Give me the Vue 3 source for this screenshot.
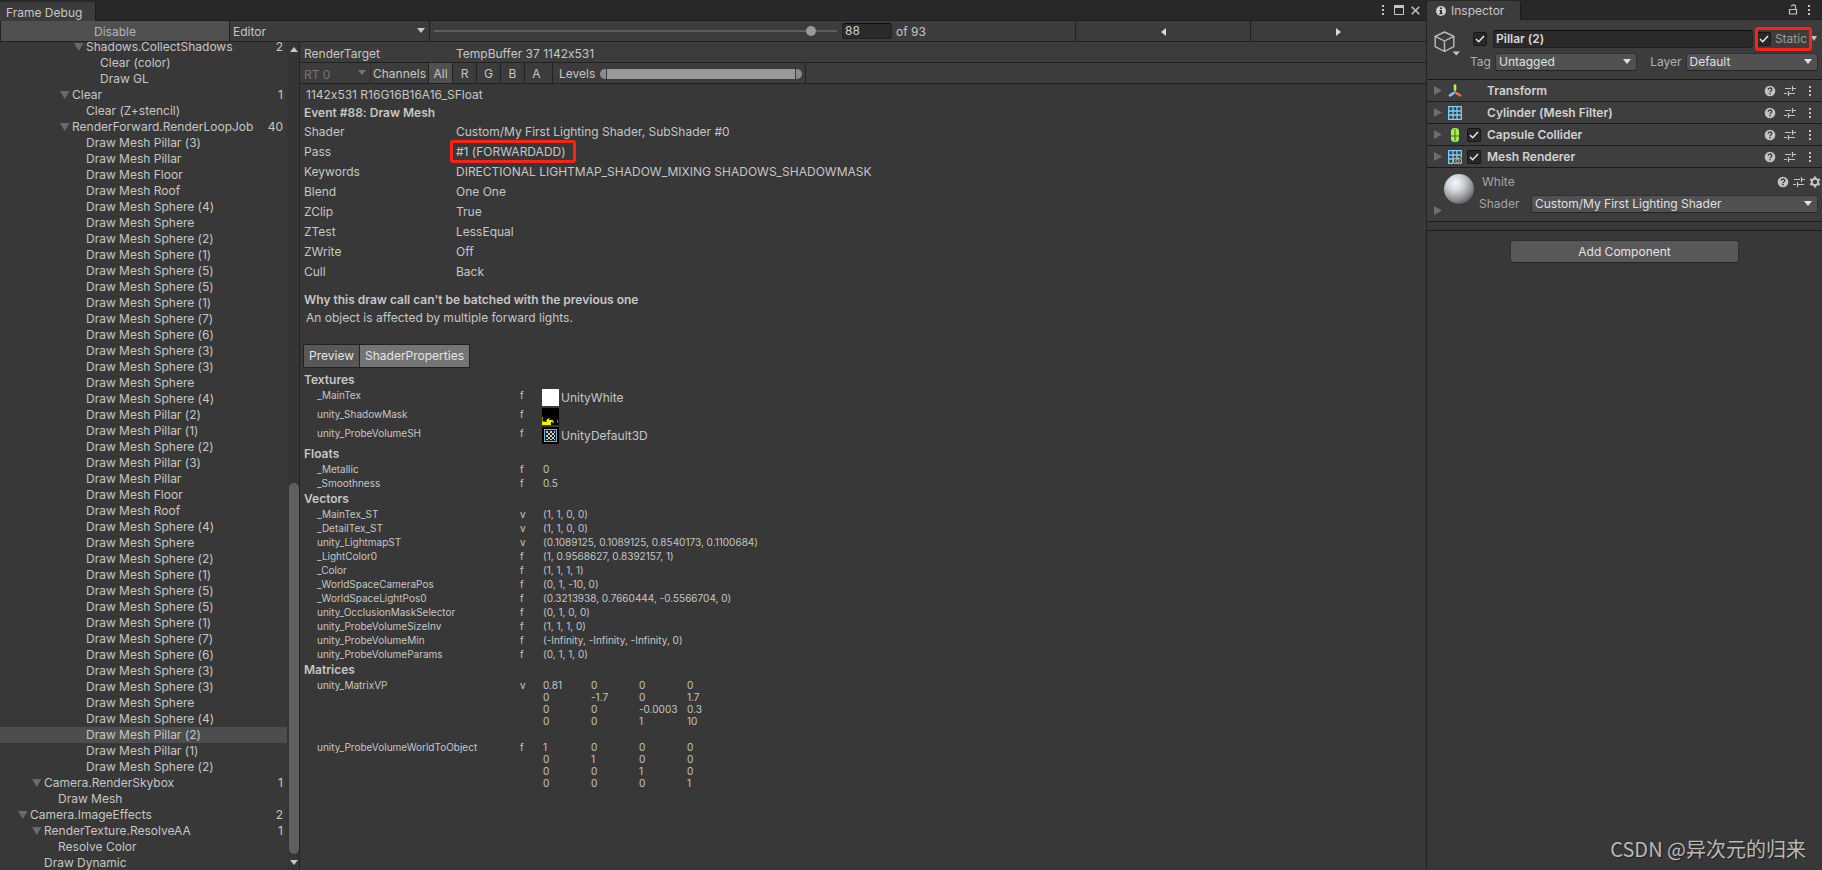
<script setup>
import { ref } from 'vue'

const meshes = [
  'Pillar (3)', 'Pillar', 'Floor', 'Roof', 'Sphere (4)', 'Sphere', 'Sphere (2)', 'Sphere (1)',
  'Sphere (5)', 'Sphere (5)', 'Sphere (1)', 'Sphere (7)', 'Sphere (6)', 'Sphere (3)', 'Sphere (3)',
  'Sphere', 'Sphere (4)', 'Pillar (2)', 'Pillar (1)', 'Sphere (2)',
]

const events = [
  { level: 5, name: 'Shadows.CollectShadows', count: 2 },
  { level: 6, name: 'Clear (color)' },
  { level: 6, name: 'Draw GL' },
  { level: 4, name: 'Clear', count: 1 },
  { level: 5, name: 'Clear (Z+stencil)' },
  { level: 4, name: 'RenderForward.RenderLoopJob', count: 40 },
  ...[...meshes, ...meshes].map((n, i) => ({
    level: 5,
    name: 'Draw Mesh ' + n,
    selected: i === 37,
  })),
  { level: 2, name: 'Camera.RenderSkybox', count: 1 },
  { level: 3, name: 'Draw Mesh' },
  { level: 1, name: 'Camera.ImageEffects', count: 2 },
  { level: 2, name: 'RenderTexture.ResolveAA', count: 1 },
  { level: 3, name: 'Resolve Color' },
  { level: 2, name: 'Draw Dynamic' },
]

const details = [
  ['Shader', 'Custom/My First Lighting Shader, SubShader #0'],
  ['Pass', '#1 (FORWARDADD)'],
  ['Keywords', 'DIRECTIONAL LIGHTMAP_SHADOW_MIXING SHADOWS_SHADOWMASK'],
  ['Blend', 'One One'],
  ['ZClip', 'True'],
  ['ZTest', 'LessEqual'],
  ['ZWrite', 'Off'],
  ['Cull', 'Back'],
]

const textures = [
  { name: '_MainTex', stage: 'f', kind: 'white', value: 'UnityWhite' },
  { name: 'unity_ShadowMask', stage: 'f', kind: 'mask', value: '' },
  { name: 'unity_ProbeVolumeSH', stage: 'f', kind: 'volume', value: 'UnityDefault3D' },
]

const valueGroups = [
  {
    title: 'Floats',
    rows: [
      ['_Metallic', 'f', '0'],
      ['_Smoothness', 'f', '0.5'],
    ],
  },
  {
    title: 'Vectors',
    rows: [
      ['_MainTex_ST', 'v', '(1, 1, 0, 0)'],
      ['_DetailTex_ST', 'v', '(1, 1, 0, 0)'],
      ['unity_LightmapST', 'v', '(0.1089125, 0.1089125, 0.8540173, 0.1100684)'],
      ['_LightColor0', 'f', '(1, 0.9568627, 0.8392157, 1)'],
      ['_Color', 'f', '(1, 1, 1, 1)'],
      ['_WorldSpaceCameraPos', 'f', '(0, 1, -10, 0)'],
      ['_WorldSpaceLightPos0', 'f', '(0.3213938, 0.7660444, -0.5566704, 0)'],
      ['unity_OcclusionMaskSelector', 'f', '(0, 1, 0, 0)'],
      ['unity_ProbeVolumeSizeInv', 'f', '(1, 1, 1, 0)'],
      ['unity_ProbeVolumeMin', 'f', '(-Infinity, -Infinity, -Infinity, 0)'],
      ['unity_ProbeVolumeParams', 'f', '(0, 1, 1, 0)'],
    ],
  },
]

const matrices = [
  {
    name: 'unity_MatrixVP',
    stage: 'v',
    rows: [['0.81', '0', '0', '0'], ['0', '-1.7', '0', '1.7'], ['0', '0', '-0.0003', '0.3'], ['0', '0', '1', '10']],
  },
  {
    name: 'unity_ProbeVolumeWorldToObject',
    stage: 'f',
    rows: [['1', '0', '0', '0'], ['0', '1', '0', '0'], ['0', '0', '1', '0'], ['0', '0', '0', '1']],
  },
]

const components = [
  { name: 'Transform', icon: 'transform' },
  { name: 'Cylinder (Mesh Filter)', icon: 'grid' },
  { name: 'Capsule Collider', icon: 'capsule', toggle: true },
  { name: 'Mesh Renderer', icon: 'renderer', toggle: true },
]

const channels = ['All', 'R', 'G', 'B', 'A']
const channel = ref('All')
const eventIndex = ref(88)
const objectName = ref('Pillar (2)')
</script>

<template>
  <div class="editor">
    <svg class="defs" aria-hidden="true">
      <symbol id="arrow-down" viewBox="0 0 8 5"><path d="M0 0h8L4 5z" fill="currentColor" /></symbol>
      <symbol id="help" viewBox="0 0 12 12">
        <circle cx="6" cy="6" r="5.3" fill="#c4c4c4" />
        <path d="M4.2 4.7a1.8 1.6 0 1 1 2.7 1.3c-.6.4-.9.6-.9 1.2" fill="none" stroke="#3a3a3a" stroke-width="1.3" />
        <rect x="5.3" y="8" width="1.4" height="1.4" fill="#3a3a3a" />
      </symbol>
      <symbol id="preset" viewBox="0 0 12 12">
        <path d="M1 3.500h6M9 3.500h3M0 8.500h3M5 8.500h6M8.500 1v5M4.500 6v5" fill="none" stroke="#c4c4c4" stroke-width="1.2" />
      </symbol>
      <symbol id="dots" viewBox="0 0 4 12">
        <path d="M1 1h2v2H1zM1 5h2v2H1zM1 9h2v2H1z" fill="#c4c4c4" />
      </symbol>
      <symbol id="gear" viewBox="0 0 12 12">
        <circle cx="6" cy="6" r="3.2" fill="none" stroke="#c4c4c4" stroke-width="2" />
        <path d="M6 .5v2M6 9.500v2M1.200 3.200l1.800 1M9 7.800l1.800 1M1.200 8.800l1.800-1M9 4.200l1.800-1" stroke="#c4c4c4" stroke-width="2.200" />
      </symbol>
    </svg>

    <section class="debugger">
      <header class="tabbar">
        <h1 class="tab">Frame Debug</h1>
        <div class="window-actions">
          <button aria-label="Menu"><svg width="4" height="12"><use href="#dots" /></svg></button>
          <button aria-label="Maximize">
            <svg width="10" height="10" viewBox="0 0 10 10"><path d="M.5.5h9v9h-9z" fill="none" stroke="#c4c4c4" /><path d="M0 0h10v3H0z" fill="#c4c4c4" /></svg>
          </button>
          <button aria-label="Close">
            <svg width="9" height="9" viewBox="0 0 9 9"><path d="M.7.7l7.600 7.600M8.300.7L.7 8.300" stroke="#c4c4c4" stroke-width="1.500" /></svg>
          </button>
        </div>
      </header>

      <div class="toolbar">
        <button class="disable">Disable</button>
        <div class="target-select">
          <select aria-label="Connection target"><option>Editor</option></select>
          <svg class="caret" width="8" height="5"><use href="#arrow-down" /></svg>
        </div>
        <div class="scrub">
          <input v-model.number="eventIndex" class="slider" type="range" min="1" max="93" aria-label="Event" />
          <input v-model.number="eventIndex" class="index" type="text" aria-label="Event number" />
          <span class="total">of 93</span>
        </div>
        <button class="step" aria-label="Previous event">
          <svg width="5" height="8" viewBox="0 0 5 8"><path d="M5 0v8L0 4z" fill="#d8d8d8" /></svg>
        </button>
        <button class="step" aria-label="Next event">
          <svg width="5" height="8" viewBox="0 0 5 8"><path d="M0 0v8l5-4z" fill="#d8d8d8" /></svg>
        </button>
      </div>

      <div class="body">
        <div class="tree-pane">
          <div class="tree-clip">
            <ul class="tree" role="tree">
              <li
                v-for="(e, i) in events"
                :key="i"
                class="event"
                :class="[`level-${e.level}`, { selected: e.selected }]"
                role="treeitem"
              >
                <svg v-if="e.count" class="fold" width="10" height="8" viewBox="0 0 10 8"><path d="M0 0h9.500L4.750 8z" fill="#6a6a6a" /></svg>
                <span class="event-name">{{ e.name }}</span>
                <span v-if="e.count" class="count">{{ e.count }}</span>
              </li>
            </ul>
          </div>
          <div class="scrollbar">
            <svg width="8" height="5" viewBox="0 0 8 5"><path d="M0 5h8L4 0z" fill="#c8c8c8" /></svg>
            <div class="track"><div class="thumb"></div></div>
            <svg class="down" width="8" height="5"><use href="#arrow-down" /></svg>
          </div>
        </div>

        <main class="details">
          <div class="target-row">
            <span class="key">RenderTarget</span>
            <span>TempBuffer 37 1142x531</span>
          </div>
          <div class="channel-row">
            <div class="rt-select">
              <select aria-label="Render target" disabled><option>RT 0</option></select>
              <svg class="caret" width="8" height="5"><use href="#arrow-down" /></svg>
            </div>
            <span class="channels-label">Channels</span>
            <button
              v-for="c in channels"
              :key="c"
              class="channel"
              :class="{ on: c === channel }"
              @click="channel = c"
            >{{ c }}</button>
            <div class="levels">
              <span>Levels</span>
              <div class="minmax" role="img" aria-label="Levels range"><span class="cap"></span><span class="bar"></span><span class="cap end"></span></div>
            </div>
          </div>

          <div class="content">
            <p class="format">1142x531 R16G16B16A16_SFloat</p>
            <h2 class="event-title">Event #88: Draw Mesh</h2>
            <dl class="state">
              <template v-for="[k, v] in details" :key="k">
                <dt>{{ k }}</dt>
                <dd><span :class="{ marked: k === 'Pass' }">{{ v }}</span></dd>
              </template>
            </dl>
            <h2 class="reason-title">Why this draw call can't be batched with the previous one</h2>
            <p class="reason">An object is affected by multiple forward lights.</p>

            <div class="modes">
              <button>Preview</button>
              <button class="on">ShaderProperties</button>
            </div>

            <h3>Textures</h3>
            <table class="props textures">
              <tbody>
                <tr v-for="t in textures" :key="t.name">
                  <td class="name">{{ t.name }}</td>
                  <td class="stage">{{ t.stage }}</td>
                  <td>
                    <div class="texture">
                      <svg width="17" height="17" viewBox="0 0 17 17">
                        <rect width="17" height="17" :fill="t.kind === 'white' ? '#fff' : '#000'" />
                        <template v-if="t.kind === 'mask'">
                          <path d="M0 14h9v3H0zM5 11h2v3H5zM7 12h4v2H7z" fill="#f4f000" />
                          <path d="M0 9h1v5H0zM1 13h2v1H1zM4 12h1v2H4zM6 10h2v1H6zM10 13h2v2h-2zM15 12h1v3h-1z" fill="#8f8c00" />
                        </template>
                        <template v-if="t.kind === 'volume'">
                          <rect x="2.500" y="2.500" width="12" height="12" fill="#1d2326" stroke="#6cb8dc" />
                          <path d="M4 4h2v2H4zM8 4h2v2H8zM12 4h1v2h-1zM6 6h2v2H6zM10 6h2v2h-2zM4 8h2v2H4zM8 8h2v2H8zM12 8h1v2h-1zM6 10h2v2H6zM10 10h2v2h-2zM4 12h2v1H4zM8 12h2v1H8zM12 12h1v1h-1z" fill="#c9c9c9" />
                        </template>
                      </svg>
                      <span>{{ t.value }}</span>
                    </div>
                  </td>
                </tr>
              </tbody>
            </table>

            <template v-for="g in valueGroups" :key="g.title">
              <h3>{{ g.title }}</h3>
              <table class="props">
                <tbody>
                  <tr v-for="r in g.rows" :key="r[0]">
                    <td class="name">{{ r[0] }}</td>
                    <td class="stage">{{ r[1] }}</td>
                    <td class="value">{{ r[2] }}</td>
                  </tr>
                </tbody>
              </table>
            </template>

            <h3>Matrices</h3>
            <table class="props matrices">
              <tbody>
                <tr v-for="m in matrices" :key="m.name">
                  <td class="name">{{ m.name }}</td>
                  <td class="stage">{{ m.stage }}</td>
                  <td class="value">
                    <div v-for="(r, i) in m.rows" :key="i" class="matrix-row">
                      <span v-for="(c, j) in r" :key="j">{{ c }}</span>
                    </div>
                  </td>
                </tr>
              </tbody>
            </table>
          </div>
        </main>
      </div>
    </section>

    <aside class="inspector">
      <header class="tabbar">
        <h2 class="tab">
          <svg width="10" height="10" viewBox="0 0 10 10"><circle cx="5" cy="5" r="5" fill="#d0d0d0" /><path d="M4 1.500h2v1.500H4zM3.500 4H6v3.200h.8v1H3.300v-1H4V5h-.5z" fill="#333" /></svg>
          Inspector
        </h2>
        <div class="window-actions">
          <button aria-label="Lock">
            <svg width="10" height="11" viewBox="0 0 10 11"><path d="M1.500 5.500h7v4.500h-7zM7.500 5V3a2 2 0 0 0-4-.2" fill="none" stroke="#c4c4c4" stroke-width="1.200" /></svg>
          </button>
          <button aria-label="Inspector menu"><svg width="4" height="12"><use href="#dots" /></svg></button>
        </div>
      </header>

      <div class="object">
        <button class="object-icon" aria-label="Object icon">
          <svg width="26" height="25" viewBox="0 0 26 25">
            <path d="M10.500 1l9.300 4.300v10.400l-9.300 4.800-9.300-4.800V5.300zM1.200 5.300l9.300 4.700 9.300-4.700M10.500 10v10.500" fill="none" stroke="#bdbdbd" stroke-width="1.400" stroke-linejoin="round" />
            <path d="M18.500 20.500H26l-3.700 4z" fill="#c4c4c4" />
          </svg>
        </button>
        <div class="object-fields">
          <div class="name-row">
            <input class="check" type="checkbox" checked aria-label="Active" />
            <input v-model="objectName" class="object-name" type="text" aria-label="Object name" />
            <label class="static"><input class="check" type="checkbox" checked />Static</label>
            <button class="static-menu" aria-label="Static options"><svg width="6" height="5" viewBox="0 0 6 5"><path d="M0 0h6L3 5z" fill="#c4c4c4" /></svg></button>
          </div>
          <div class="tag-row">
            <label for="tag">Tag</label>
            <div class="dropdown tag">
              <select id="tag"><option>Untagged</option></select>
              <svg class="caret" width="8" height="5"><use href="#arrow-down" /></svg>
            </div>
            <label for="layer" class="layer-label">Layer</label>
            <div class="dropdown layer">
              <select id="layer"><option>Default</option></select>
              <svg class="caret" width="8" height="5"><use href="#arrow-down" /></svg>
            </div>
          </div>
        </div>
      </div>

      <div v-for="c in components" :key="c.name" class="component">
        <button class="expand" aria-label="Expand"><svg width="8" height="9" viewBox="0 0 8 9"><path d="M0 0l8 4.500L0 9z" fill="#6e6e6e" /></svg></button>
        <svg class="component-icon" width="14" height="14" viewBox="0 0 14 14">
          <template v-if="c.icon === 'transform'">
            <path d="M7 1.500v4" stroke="#b6f24a" stroke-width="2.600" stroke-linecap="round" />
            <path d="M5.300 9.300L2 11.300" stroke="#7cc9f5" stroke-width="2.600" stroke-linecap="round" />
            <path d="M8.700 9.300l3.500 2" stroke="#f5683c" stroke-width="2.600" stroke-linecap="round" />
            <path d="M7 5v3M7 8L5 9.500M7 8l2 1.500" stroke="#c8c8c8" stroke-width=".8" />
          </template>
          <path v-if="c.icon === 'grid'" d="M.7.7h12.600v12.600H.7zM5 1v12M9 1v12M1 5h12M1 9h12" fill="none" stroke="#7fd0fb" stroke-width="1.300" />
          <template v-if="c.icon === 'capsule'">
            <rect x="3" y="0" width="8" height="14" rx="3.500" fill="#a4f04a" />
            <path d="M3 8h8M7 1v12" stroke="#3f6a1c" stroke-width="1" />
          </template>
          <template v-if="c.icon === 'renderer'">
            <path d="M5 13.300H.7V.7h12.600V8M5 1v12M9 1v7M1 5h12M1 9h6" fill="none" stroke="#7fd0fb" stroke-width="1.300" />
            <ellipse cx="9.500" cy="11" rx="4.300" ry="2.900" fill="#3e3e3e" stroke="#c0c0c0" stroke-width="1.200" />
            <circle cx="9.500" cy="11" r="1.700" fill="none" stroke="#c0c0c0" />
          </template>
        </svg>
        <div class="toggle-slot"><input v-if="c.toggle" class="check" type="checkbox" checked :aria-label="c.name" /></div>
        <h3 class="component-name">{{ c.name }}</h3>
        <div class="component-actions">
          <button aria-label="Help"><svg width="12" height="12"><use href="#help" /></svg></button>
          <button aria-label="Presets"><svg width="12" height="12"><use href="#preset" /></svg></button>
          <button aria-label="More"><svg width="4" height="12"><use href="#dots" /></svg></button>
        </div>
      </div>

      <div class="material">
        <div class="material-left">
          <svg width="32" height="32" viewBox="0 0 32 32">
            <defs>
              <radialGradient id="ball" cx=".38" cy=".3" r=".75">
                <stop offset="0" stop-color="#f6f8fb" /><stop offset=".35" stop-color="#d2d6dc" />
                <stop offset=".75" stop-color="#8d9094" /><stop offset="1" stop-color="#55565a" />
              </radialGradient>
            </defs>
            <circle cx="16" cy="16" r="15" fill="url(#ball)" />
          </svg>
          <button class="expand" aria-label="Expand material"><svg width="8" height="9" viewBox="0 0 8 9"><path d="M0 0l8 4.500L0 9z" fill="#6e6e6e" /></svg></button>
        </div>
        <div class="material-main">
          <div class="material-head">
            <span class="material-name">White</span>
            <div class="material-actions">
              <button aria-label="Help"><svg width="12" height="12"><use href="#help" /></svg></button>
              <button aria-label="Presets"><svg width="12" height="12"><use href="#preset" /></svg></button>
              <button aria-label="Settings"><svg width="12" height="12"><use href="#gear" /></svg></button>
            </div>
          </div>
          <div class="shader-row">
            <label for="shader">Shader</label>
            <div class="dropdown shader">
              <select id="shader"><option>Custom/My First Lighting Shader</option></select>
              <svg class="caret" width="8" height="5"><use href="#arrow-down" /></svg>
            </div>
          </div>
        </div>
      </div>
      <div class="divider"></div>
      <button class="add">Add Component</button>
    </aside>

    <div class="watermark">CSDN @异次元的归来</div>
  </div>
</template>

<style>
body {
  margin: 0;
  background: #383838;
}
</style>

<style scoped>
.editor {
  position: relative;
  display: grid;
  grid-template-columns: minmax(0, 1fr) 396px;
  height: 100vh;
  overflow: hidden;
  background: #383838;
  color: #c6c6c6;
  font: 12px/16px Inter, "Liberation Sans", sans-serif;
  font-variant-ligatures: no-contextual;
}
.editor *,
.editor *::before,
.editor *::after {
  box-sizing: border-box;
}
.defs {
  position: absolute;
  width: 0;
  height: 0;
}
svg {
  display: block;
  flex: none;
}
button,
input,
select {
  margin: 0;
  padding: 0;
  border: 0;
  background: none;
  color: inherit;
  font: inherit;
  font-variant-ligatures: no-contextual;
  outline: none;
  border-radius: 0;
}
button {
  display: flex;
  align-items: center;
  justify-content: center;
}
select {
  appearance: none;
  width: 100%;
  height: 100%;
  opacity: 1;
}
h1,
h2,
h3,
p,
dl,
dd,
ul {
  margin: 0;
  padding: 0;
  font-size: inherit;
}
h2,
h3 {
  font-weight: 600;
}
.caret {
  position: absolute;
  right: 5px;
  top: 50%;
  margin-top: -3px;
  pointer-events: none;
}

.debugger {
  display: flex;
  flex-direction: column;
  min-width: 0;
  min-height: 0;
}
.tabbar {
  display: flex;
  justify-content: space-between;
  height: 21px;
  flex: none;
  background: #282828;
  border-bottom: 1px solid #1f1f1f;
}
.tab {
  display: flex;
  align-items: center;
  gap: 5px;
  margin: 2px 0 -1px;
  padding: 2px 13px 0 6px;
  background: #3c3c3c;
  border-right: 1px solid #1c1c1c;
  border-radius: 2px 2px 0 0;
  font-weight: 400;
}
.window-actions {
  display: flex;
  align-items: center;
  gap: 8px;
  padding-right: 5px;
}
.debugger .window-actions {
  gap: 7px;
  padding-right: 6px;
}
.debugger .window-actions button:first-child {
  width: 8px;
}
.toolbar {
  display: grid;
  grid-template-columns: 229px 201px minmax(0, 1fr) 175px 176px;
  height: 21px;
  flex: none;
  background: #3c3c3c;
  border-bottom: 1px solid #222;
}
.disable {
  background: #505050;
  color: #b4b4b4;
  border-left: 1px solid #222;
}
.toolbar button,
.toolbar select {
  padding-top: 2px;
}
.target-select {
  position: relative;
  border-left: 1px solid #222;
  border-right: 1px solid #222;
  padding-left: 3px;
}
.target-select .caret {
  right: 4px;
}
.scrub {
  display: flex;
  align-items: center;
  padding-left: 4px;
}
.slider {
  appearance: none;
  width: 403px;
  height: 12px;
  margin-right: 5px;
  background: linear-gradient(#5e5e5e, #5e5e5e) center / 100% 2px no-repeat;
}
.slider::-webkit-slider-thumb {
  appearance: none;
  width: 10px;
  height: 10px;
  border-radius: 50%;
  background: #999;
}
.index {
  width: 50px;
  height: 16px;
  padding: 0 2px;
  background: #2a2a2a;
  border: 1px solid #212121;
  border-top-color: #0d0d0d;
  border-radius: 3px;
  color: #d2d2d2;
}
.total {
  margin-left: 4px;
  padding-top: 2px;
}
.step {
  border-left: 1px solid #222;
}

.body {
  display: flex;
  flex: 1;
  min-height: 0;
}
.tree-pane {
  display: flex;
  width: 300px;
  flex: none;
  border-right: 1px solid #222;
}
.tree-clip {
  flex: 1;
  overflow: hidden;
}
.tree {
  margin-top: -3px;
  list-style: none;
}
.event {
  display: flex;
  align-items: center;
  height: 16px;
  padding-right: 4px;
  white-space: nowrap;
}
.event.selected {
  background: #4d4d4d;
}
.level-1 { padding-left: 30px; }
.level-2 { padding-left: 44px; }
.level-3 { padding-left: 58px; }
.level-4 { padding-left: 72px; }
.level-5 { padding-left: 86px; }
.level-6 { padding-left: 100px; }
.fold {
  margin-left: -12px;
  margin-right: 2px;
}
.count {
  margin-left: auto;
}
.scrollbar {
  display: flex;
  flex-direction: column;
  align-items: center;
  width: 12px;
  padding: 5px 0;
  background: #353535;
  border-left: 1px solid #333;
  color: #c8c8c8;
}
.track {
  display: flex;
  flex: 1;
  flex-direction: column;
  justify-content: flex-end;
  width: 10px;
  margin: 4px 0 6px;
}
.thumb {
  height: 46.5%;
  border-radius: 5px;
  background: #5f5f5f;
}

.details {
  flex: 1;
  min-width: 0;
}
.target-row {
  display: flex;
  align-items: center;
  height: 21px;
  padding: 3px 0 0 4px;
  background: #3c3c3c;
  border-bottom: 1px solid #222;
}
.key {
  width: 152px;
}
.channel-row {
  display: flex;
  align-items: stretch;
  height: 21px;
  line-height: 22px;
  background: #3c3c3c;
  border-bottom: 1px solid #222;
}
.channel {
  padding-top: 1px;
}
.rt-select {
  position: relative;
  width: 71px;
  padding: 1px 0 0 4px;
  border-right: 1px solid #2e2e2e;
  color: #757575;
}
.rt-select .caret {
  right: 4px;
}
.channels-label {
  width: 57px;
  padding-left: 2px;
}
.channel {
  width: 24px;
  border-left: 1px solid #222;
}
.channel.on {
  background: #505050;
}
.channel:nth-last-child(2) {
  width: 28px;
  padding-right: 4px;
}
.levels {
  display: flex;
  align-items: center;
  gap: 5px;
  padding: 1px 3px 0 6px;
  border-left: 1px solid #222;
  border-right: 1px solid #222;
}
.minmax {
  display: flex;
  gap: 1px;
  width: 202px;
  height: 10px;
}
.cap {
  width: 6px;
  border-radius: 5px 0 0 5px;
  background: #8c8c8c;
}
.cap.end {
  border-radius: 0 5px 5px 0;
}
.bar {
  flex: 1;
  background: #999;
}
.content {
  padding: 2px 0 0 3px;
}
.format {
  padding-left: 3px;
}
.event-title {
  margin-top: 1px;
}
.state {
  display: grid;
  grid-template-columns: 152px 1fr;
  grid-auto-rows: 20px;
  align-items: center;
  margin-top: 1px;
  padding-left: 1px;
}
.format,
.event-title,
.reason-title {
  height: 17px;
  line-height: 17px;
}
.event-title,
.reason-title,
.content > h3 {
  padding-left: 1px;
}
.marked {
  position: relative;
}
.marked::before,
.static::after {
  content: "";
  position: absolute;
  inset: -4px -10px -4px -6px;
  border: 3px solid #fb2313;
  border-radius: 3px;
  pointer-events: none;
}
.reason-title {
  margin-top: 9px;
}
.reason {
  margin-top: 2px;
  padding-left: 3px;
}
.modes {
  display: flex;
  width: max-content;
  margin-top: 18px;
  margin-bottom: 4px;
  height: 24px;
  border: 1px solid #222;
  border-radius: 2px;
}
.modes button {
  padding: 0 5px;
  background: #585858;
  color: #e4e4e4;
}
.modes .on {
  background: #747474;
  border-left: 1px solid #222;
}
.content > h3 {
  height: 16px;
  margin-top: 1px;
}
.props {
  width: 100%;
  table-layout: fixed;
  border-collapse: collapse;
  font-size: 10px;
  line-height: 14px;
}
.props td {
  padding: 0;
  vertical-align: top;
}
.props .name {
  width: 217px;
  padding-left: 14px;
}
.props .stage {
  width: 22px;
}
.props .value {
  padding-left: 1px;
}
.texture {
  display: flex;
  align-items: center;
  gap: 2px;
  height: 19px;
  font-size: 12px;
}
.matrices tr {
  height: 62px;
}
.matrix-row {
  display: grid;
  grid-template-columns: repeat(4, 48px);
  height: 12px;
}

.inspector {
  display: flex;
  flex-direction: column;
  border-left: 1px solid #242424;
  background: #383838;
}
.inspector .tab {
  margin-top: 1px;
  padding: 1px 16px 0 9px;
  line-height: 18px;
}
.inspector .tabbar {
  height: 20px;
}
.inspector .window-actions {
  gap: 9px;
  padding-right: 11px;
}
.object {
  display: flex;
  height: 59px;
  padding: 9px 0 0 7px;
  background: #3c3c3c;
}
.object-icon {
  width: 26px;
  height: 28px;
}
.object-fields {
  flex: 1;
  min-width: 0;
}
.name-row {
  display: flex;
  align-items: center;
  height: 19px;
  padding: 0 5px 0 13px;
}
.check {
  appearance: none;
  display: block;
  flex: none;
  width: 14px;
  height: 14px;
  border: 1px solid #171717;
  border-radius: 2px;
  background: #282828;
}
.check:checked {
  background: #282828 url("data:image/svg+xml,%3Csvg xmlns='http://www.w3.org/2000/svg' viewBox='0 0 12 12'%3E%3Cpath d='M2 6l2.700 2.700L10 3' fill='none' stroke='%23e8e8e8' stroke-width='1.500'/%3E%3C/svg%3E") center / 12px 12px;
}
.object-name {
  flex: 1;
  min-width: 0;
  height: 18px;
  margin: 0 4px 0 6px;
  padding: 0 2px;
  background: #2a2a2a;
  border: 1px solid #212121;
  border-top-color: #0d0d0d;
  border-radius: 3px;
  color: #d8d8d8;
  font-weight: 600;
}
.static {
  position: relative;
  display: flex;
  align-items: center;
  gap: 4px;
  color: #9c9c9c;
}
.static::after {
  inset: -4px -5px -4px -2px;
}
.static-menu {
  margin-left: 4px;
}
.tag-row {
  display: flex;
  align-items: center;
  height: 19px;
  margin-top: 4px;
  padding: 0 4px 0 10px;
  color: #b0b0b0;
}
.dropdown {
  position: relative;
  height: 18px;
  background: #515151;
  border: 1px solid #303030;
  border-bottom-color: #242424;
  border-radius: 3px;
  color: #e0e0e0;
}
.dropdown select {
  padding-left: 3px;
}
.tag {
  flex: 142 1 0;
  margin-left: 4px;
}
.layer-label {
  margin-left: 13px;
}
.layer {
  flex: 132 1 0;
  margin-left: 4px;
}
.component {
  display: flex;
  align-items: center;
  height: 22px;
  padding: 0 6px 0 7px;
  background: #3e3e3e;
  border-top: 1px solid #1c1c1c;
}
.component-icon {
  margin: 0 5px 0 6px;
}
.toggle-slot {
  width: 20px;
}
.component-name {
  color: #d2d2d2;
}
.component-actions,
.material-actions {
  display: flex;
  gap: 8px;
  margin-left: auto;
}
.component-actions button {
  width: 12px;
}
.material-actions {
  gap: 4px;
}
.material {
  display: flex;
  height: 54px;
  padding-right: 1px;
  background: #3c3c3c;
  border-top: 1px solid #1c1c1c;
  color: #a6a6a6;
}
.material-left {
  display: flex;
  flex-direction: column;
  width: 51px;
  padding: 5px 0 0 7px;
}
.material-left > svg {
  margin-left: 9px;
}
.material-left .expand {
  align-self: flex-start;
  margin-top: 1px;
}
.material-main {
  flex: 1;
  min-width: 0;
}
.material-head {
  display: flex;
  align-items: center;
  height: 26px;
  padding: 1px 0 0 4px;
}
.shader-row {
  display: flex;
  align-items: center;
  margin-top: 1px;
  padding-right: 3px;
}
.shader-row label {
  width: 53px;
  padding-left: 1px;
}
.shader {
  flex: 1;
}
.divider {
  height: 10px;
  border: solid #1c1c1c;
  border-width: 1px 0;
}
.add {
  align-self: center;
  width: 229px;
  height: 23px;
  margin-top: 9px;
  background: #585858;
  border: 1px solid #303030;
  border-bottom-color: #242424;
  border-radius: 3px;
  color: #e4e4e4;
}
.watermark {
  position: absolute;
  right: 16px;
  bottom: 7px;
  font: 20px/28px "Noto Sans CJK SC", sans-serif;
  color: #b9b9b9;
  text-shadow: 1px 1px 1px #222;
}
</style>
